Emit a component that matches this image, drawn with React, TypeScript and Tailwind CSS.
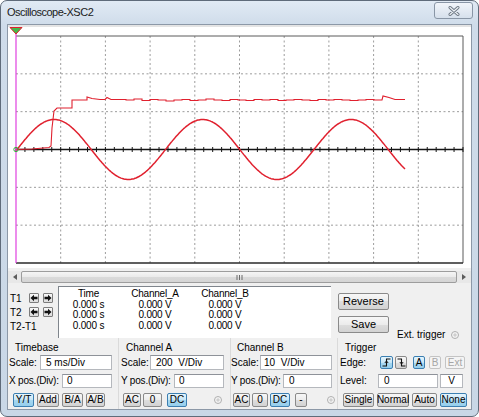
import React from 'react';

// screen geometry, in page pixels
const GX0 = 16;
const GX1 = 463;
const GY0 = 36;
const GY1 = 263;
const CY = (GY0 + GY1) / 2;
const DX = (GX1 - GX0) / 10;
const DY = (GY1 - GY0) / 6;

const sinePoints = () => {
  const pts: string[] = [];
  for (let x = 16; x <= 405; x += 1) {
    const y = CY - 30 * Math.sin((2 * Math.PI * (x - 17)) / 148.5);
    pts.push(`${x},${y.toFixed(1)}`);
  }
  return pts.join(' ');
};

const ripple = [99.5, 100, 99, 100.5, 99.5, 100, 101, 100, 99.5, 100.5, 100, 99, 100, 100.5, 99.5, 100, 100.5, 99.5, 100, 99.5, 100.5, 100, 99.5, 100, 100.5, 99.5, 100, 99.5, 100, 100.5, 100, 99.5, 100, 100.5, 100];

const stepPoints = () => {
  const pts = ['16,149.5', '32,149', '49,147.5', '51,146', '52,128', '54,111', '57,108', '72,108', '72,100', '87,100', '87,97', '92,98.5', '100,99.5', '105,99.5', '107,97.5', '111,99.5'];
  let y = 99.5;
  let i = 0;
  for (let x = 118; x < 380; x += 8) {
    const ny = ripple[i % ripple.length];
    pts.push(`${x},${y}`, `${x},${ny}`);
    y = ny;
    i++;
  }
  pts.push(`382,${y}`, '383,96', '389,97.5', '395,99.5', '405,99.5');
  return pts.join(' ');
};

const Screen = () => {
  const vlines = Array.from({ length: 9 }, (_, i) => GX0 + (i + 1) * DX);
  const hlines = [1, 2, 4, 5].map((j) => GY0 + j * DY);
  const ticks = Array.from({ length: 51 }, (_, k) => GX0 + (k * DX) / 5);
  return (
    <div className="h-[243px] bg-white">
      <svg width="463" height="243" viewBox="8 25 463 243">
        <rect x="8" y="25" width="463" height="2" fill="#e4e4e4" />
        {vlines.map((x) => (
          <line key={x} x1={x} y1={GY0} x2={x} y2={GY1} stroke="#9c9c9c" strokeDasharray="2 2.5" />
        ))}
        {hlines.map((y) => (
          <line key={y} x1={GX0} y1={y} x2={GX1} y2={y} stroke="#9c9c9c" strokeDasharray="2 2.5" />
        ))}
        <line x1={GX0} y1={GY0} x2={GX1} y2={GY0} stroke="#5a5a5a" />
        <line x1={GX1} y1={GY0} x2={GX1} y2={GY1} stroke="#5a5a5a" />
        <line x1={GX0} y1={GY1} x2={GX1} y2={GY1} stroke="#2a2a2a" strokeWidth="1.5" />
        <line x1={GX0} y1={CY} x2={GX1} y2={CY} stroke="#151515" strokeWidth="1.5" />
        {ticks.map((x) => (
          <line key={x} x1={x} y1={CY - 2.5} x2={x} y2={CY + 2.5} stroke="#151515" />
        ))}
        <polyline points={stepPoints()} fill="none" stroke="#e0202e" strokeWidth="1.1" />
        <polyline points={sinePoints()} fill="none" stroke="#e0202e" strokeWidth="1.5" />
        <line x1={GX0} y1="28" x2={GX0} y2={GY1} stroke="#e040e0" strokeWidth="1.2" />
        <circle cx={GX0} cy={CY} r="2.2" fill="none" stroke="#35b040" strokeWidth="1" />
        <polygon points="10,27.5 22,27.5 16,34" fill="#44b84a" stroke="#e0202e" strokeWidth="1" />
      </svg>
    </div>
  );
};

type BtnProps = { w: string; on?: boolean; off?: boolean; h?: string; children: React.ReactNode };

const Btn = ({ w, on, off, h = 'h-[14px]', children }: BtnProps) => {
  const tone = on
    ? 'border-[#3c7fb1] bg-[linear-gradient(#e5f5fd,#c6e6f7_50%,#a7d8f1_50%,#95ceec)] text-black'
    : off
      ? 'border-[#c4c4c4] bg-[#f4f4f4] text-[#a6a6a6]'
      : 'border-[#8a8a8a] bg-[linear-gradient(#f7f7f7,#ececec_50%,#dedede_50%,#d2d2d2)] text-black';
  return (
    <div className={`${w} ${h} shrink-0 flex items-center justify-center rounded-[2px] border text-[10px] leading-none ${tone}`}>
      {children}
    </div>
  );
};

const Field = ({ w, pl, children }: { w: string; pl: string; children: React.ReactNode }) => (
  <div className={`${w} ${pl} h-full shrink-0 flex items-center bg-white border border-[#b5b8bd] border-t-[#8e9299] text-[10px] whitespace-pre`}>
    {children}
  </div>
);

const Radio = () => (
  <div className="w-[8px] h-[8px] shrink-0 rounded-full border border-[#b0b0b0] bg-[radial-gradient(circle,#cfcfcf_35%,#f4f4f4_40%)]" />
);

const Arrow = ({ left }: { left?: boolean }) => (
  <div className="w-[10px] h-[10px] flex items-center justify-center rounded-[1px] border border-[#7c7c7c] bg-[linear-gradient(#f7f7f7,#dcdcdc)]">
    <svg width="8" height="8" viewBox="0 0 8 8">
      {left ? (
        <path d="M0.5 4 L4 0.8 V2.8 H7.5 V5.2 H4 V7.2 Z" fill="#111" />
      ) : (
        <path d="M7.5 4 L4 0.8 V2.8 H0.5 V5.2 H4 V7.2 Z" fill="#111" />
      )}
    </svg>
  </div>
);

const EdgeIcon = ({ rising }: { rising?: boolean }) => (
  <svg width="9" height="9" viewBox="0 0 9 9">
    {rising ? (
      <>
        <path d="M0.5 8 H4.5 V1 H8.5" fill="none" stroke="#111" strokeWidth="1.1" />
        <path d="M2.8 5 L4.5 3 L6.2 5" fill="none" stroke="#111" strokeWidth="1" />
      </>
    ) : (
      <>
        <path d="M0.5 1 H4.5 V8 H8.5" fill="none" stroke="#111" strokeWidth="1.1" />
        <path d="M2.8 4 L4.5 6 L6.2 4" fill="none" stroke="#111" strokeWidth="1" />
      </>
    )}
  </svg>
);

const App = () => {
  return (
    <div className="w-[479px] h-[417px] flex flex-col overflow-hidden rounded-[7px] border border-[#5f6b7a] bg-[linear-gradient(180deg,#e1eaf4_0px,#cfdcea_24px,#c9d7e6_100%)] font-['Liberation_Sans',Arial,sans-serif] text-black whitespace-nowrap">
      {/* title bar */}
      <div className="h-[23px] shrink-0 flex items-start justify-between">
        <span className="pl-[6px] pt-[5px] text-[11px] leading-[13px] tracking-[-0.5px] text-[#1b1b1b]">Oscilloscope-XSC2</span>
        <div className="mr-[5px] mt-[1px] w-[39px] h-[17px] flex items-center justify-center rounded-[3px] border border-[#8996a6] bg-[linear-gradient(#f1f5fa,#d6e0ec)]">
          <svg width="12" height="10" viewBox="0 0 12 10">
            <path d="M2 1.5 L10 8.5 M10 1.5 L2 8.5" stroke="#6b7682" strokeWidth="3" strokeLinecap="round" />
            <path d="M2 1.5 L10 8.5 M10 1.5 L2 8.5" stroke="#eef2f6" strokeWidth="1.2" strokeLinecap="round" />
          </svg>
        </div>
      </div>

      {/* client area */}
      <div className="mx-[6px] h-[386px] shrink-0 flex flex-col border border-[#8c98a7] bg-[#f0f0f0]">
        <Screen />

        {/* horizontal scroll bar */}
        <div className="mt-[3px] h-[12px] flex bg-[#e8e8e8]">
          <div className="w-[13px] flex items-center justify-center">
            <svg width="4" height="6" viewBox="0 0 4 6">
              <path d="M4 0 L0 3 L4 6 Z" fill="#5c5c5c" />
            </svg>
          </div>
          <div className="flex-1 flex items-center justify-center rounded-[2px] border border-[#9d9d9d] bg-[linear-gradient(#f5f5f5,#eaeaea_50%,#dadada_50%,#d5d5d5)]">
            <svg width="7" height="5" viewBox="0 0 7 5">
              <path d="M1 0 V5 M3.5 0 V5 M6 0 V5" stroke="#6a6a6a" strokeWidth="1" />
            </svg>
          </div>
          <div className="w-[14px] flex items-center justify-center">
            <svg width="4" height="6" viewBox="0 0 4 6">
              <path d="M0 0 L4 3 L0 6 Z" fill="#5c5c5c" />
            </svg>
          </div>
        </div>

        {/* cursors and readout */}
        <div className="mt-[2px] h-[53px] flex text-[10px]">
          <div className="w-[50px] pt-[6px] pl-[2px] flex flex-col">
            <div className="h-[14px] flex items-center">
              <span className="w-[19px]">T1</span>
              <Arrow left />
              <div className="w-[4px]" />
              <Arrow />
            </div>
            <div className="h-[14px] flex items-center">
              <span className="w-[19px]">T2</span>
              <Arrow left />
              <div className="w-[4px]" />
              <Arrow />
            </div>
            <div className="h-[14px] flex items-center">T2-T1</div>
          </div>

          <div className="w-[273px] h-[52px] mt-[1px] pt-[2px] border-l border-t border-[#7f858c] bg-white">
            <div className="grid grid-cols-[59px_74px_66px] text-center leading-[10.5px] tracking-[-0.2px]">
              <span>Time</span>
              <span>Channel_A</span>
              <span>Channel_B</span>
              <span>0.000 s</span>
              <span>0.000 V</span>
              <span>0.000 V</span>
              <span>0.000 s</span>
              <span>0.000 V</span>
              <span>0.000 V</span>
              <span>0.000 s</span>
              <span>0.000 V</span>
              <span>0.000 V</span>
            </div>
          </div>

          <div className="flex-1 pl-[7px] flex">
            <div className="mt-[8px] flex flex-col gap-[6px]">
              <Btn w="w-[51px]" h="h-[17px]">
                <span className="text-[11px]">Reverse</span>
              </Btn>
              <Btn w="w-[51px]" h="h-[17px]">
                <span className="text-[11px]">Save</span>
              </Btn>
            </div>
            <div className="ml-[8px] mt-[44px] h-[12px] flex items-center gap-[6px]">
              <span className="leading-[12px]">Ext. trigger</span>
              <Radio />
            </div>
          </div>
        </div>

        {/* control groups */}
        <div className="flex-1 flex text-[10px] leading-[12px]">
          {/* Timebase */}
          <div className="w-[110px] pt-[4px] flex flex-col">
            <span className="pl-[7px]">Timebase</span>
            <div className="mt-[1px] h-[15px] flex items-center pl-[1px]">
              <span className="w-[31px]">Scale:</span>
              <Field w="w-[72px]" pl="pl-[5px]">5 ms/Div</Field>
            </div>
            <div className="mt-[4px] h-[14px] flex items-center pl-[1px]">
              <span className="w-[53px] tracking-[-0.2px]">X pos.(Div):</span>
              <Field w="w-[50px]" pl="pl-[4px]">0</Field>
            </div>
            <div className="mt-[5px] flex gap-[3px] pl-[5px]">
              <Btn w="w-[21px]" on>Y/T</Btn>
              <Btn w="w-[22px]">Add</Btn>
              <Btn w="w-[21px]">B/A</Btn>
              <Btn w="w-[19px]">A/B</Btn>
            </div>
          </div>

          {/* Channel A */}
          <div className="w-[112px] pt-[4px] flex flex-col border-l border-[#dadada]">
            <span className="pl-[7px]">Channel A</span>
            <div className="mt-[1px] h-[15px] flex items-center pl-[2px]">
              <span className="w-[29px]">Scale:</span>
              <Field w="w-[74px]" pl="pl-[5px]">200  V/Div</Field>
            </div>
            <div className="mt-[4px] h-[14px] flex items-center pl-[2px]">
              <span className="w-[53px] tracking-[-0.2px]">Y pos.(Div):</span>
              <Field w="w-[50px]" pl="pl-[4px]">0</Field>
            </div>
            <div className="mt-[5px] flex items-center gap-[2px] pl-[4px]">
              <Btn w="w-[18px]">AC</Btn>
              <Btn w="w-[19px]">0</Btn>
              <div className="w-[1px]" />
              <Btn w="w-[20px]" on>DC</Btn>
              <div className="w-[23px]" />
              <Radio />
            </div>
          </div>

          {/* Channel B */}
          <div className="w-[107px] pt-[4px] flex flex-col border-l border-[#dadada]">
            <span className="pl-[6px]">Channel B</span>
            <div className="mt-[1px] h-[15px] flex items-center">
              <span className="w-[29px]">Scale:</span>
              <Field w="w-[72px]" pl="pl-[3px]">10  V/Div</Field>
            </div>
            <div className="mt-[4px] h-[14px] flex items-center">
              <span className="w-[52px] tracking-[-0.2px]">Y pos.(Div):</span>
              <Field w="w-[49px]" pl="pl-[5px]">0</Field>
            </div>
            <div className="mt-[5px] flex items-center gap-[2px] pl-[2px]">
              <Btn w="w-[17px]">AC</Btn>
              <Btn w="w-[16px]">0</Btn>
              <Btn w="w-[20px]" on>DC</Btn>
              <div className="w-[1px]" />
              <Btn w="w-[12px]">-</Btn>
              <div className="w-[16px]" />
              <Radio />
            </div>
          </div>

          {/* Trigger */}
          <div className="flex-1 pt-[4px] flex flex-col border-l border-[#dadada]">
            <span className="pl-[7px]">Trigger</span>
            <div className="mt-[1px] h-[15px] flex items-center pl-[2px]">
              <span className="w-[40px]">Edge:</span>
              <Btn w="w-[13px]" h="h-[13px]" on>
                <EdgeIcon rising />
              </Btn>
              <div className="w-[2px]" />
              <Btn w="w-[12px]" h="h-[13px]">
                <EdgeIcon />
              </Btn>
              <div className="w-[6px]" />
              <Btn w="w-[12px]" h="h-[13px]" on>A</Btn>
              <div className="w-[4px]" />
              <Btn w="w-[12px]" h="h-[13px]" off>B</Btn>
              <div className="w-[4px]" />
              <Btn w="w-[20px]" h="h-[13px]" off>Ext</Btn>
            </div>
            <div className="mt-[4px] h-[14px] flex items-center pl-[2px]">
              <span className="w-[38px]">Level:</span>
              <Field w="w-[60px]" pl="pl-[5px]">0</Field>
              <div className="w-[2px]" />
              <div className="w-[23px] h-full flex items-center justify-center bg-white border border-[#b5b8bd] border-t-[#8e9299]">V</div>
            </div>
            <div className="mt-[5px] flex gap-[3px] pl-[5px]">
              <Btn w="w-[31px]">Single</Btn>
              <Btn w="w-[32px]">Normal</Btn>
              <Btn w="w-[25px]">Auto</Btn>
              <Btn w="w-[27px]" on>None</Btn>
            </div>
          </div>
        </div>
      </div>
    </div>
  );
};

export default App;
